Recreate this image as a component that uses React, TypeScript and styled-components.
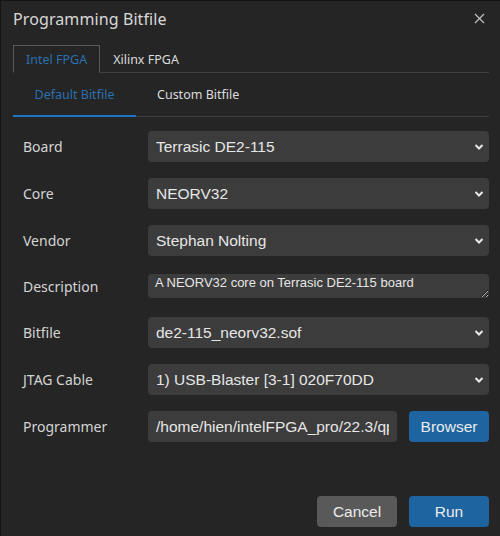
import React from "react";
import styled, { createGlobalStyle } from "styled-components";

const GlobalStyle = createGlobalStyle`
  html, body {
    margin: 0;
    padding: 0;
    background: #252525;
  }
  * {
    box-sizing: border-box;
  }
`;

const Dialog = styled.div`
  width: 500px;
  height: 536px;
  background: #252525;
  border-top: 1px solid #151515;
  border-left: 1px solid #151515;
  display: flex;
  flex-direction: column;
  padding: 0 11px 9px 12px;
  font-family: "Noto Sans", "Open Sans", sans-serif;
  color: #d6d6d6;
`;

const Header = styled.div`
  display: flex;
  align-items: center;
  justify-content: space-between;
  height: 35px;
`;

const Title = styled.h1`
  margin: 0;
  font-size: 16px;
  font-weight: 400;
  color: #d8d8d8;
  letter-spacing: 0.1px;
`;

const CloseButton = styled.button`
  background: none;
  border: none;
  padding: 0;
  margin-right: 3px;
  width: 12px;
  height: 12px;
  display: flex;
  color: #bdbdbd;
`;

const OuterTabs = styled.div`
  display: flex;
  margin-top: 9px;
  border-bottom: 1px solid #3f3f3f;
`;

const OuterTab = styled.div<{ $active?: boolean }>`
  height: 28px;
  padding: 0 12px;
  margin-bottom: -1px;
  display: flex;
  align-items: center;
  font-size: 12.5px;
  color: ${(p) => (p.$active ? "#2a70b0" : "#dcdcdc")};
  border: 1px solid ${(p) => (p.$active ? "#5a5a5a" : "transparent")};
  border-bottom: 1px solid ${(p) => (p.$active ? "#252525" : "transparent")};
`;

const InnerTabs = styled.div`
  display: flex;
  border-bottom: 1px solid #3f3f3f;
  margin-top: 0;
`;

const InnerTab = styled.div<{ $active?: boolean }>`
  width: ${(p) => (p.$active ? "123px" : "auto")};
  padding: ${(p) => (p.$active ? "0" : "0 21px")};
  height: 44px;
  margin-bottom: -1px;
  display: flex;
  align-items: center;
  justify-content: center;
  font-size: 12.5px;
  color: ${(p) => (p.$active ? "#2a70b0" : "#dcdcdc")};
  border-bottom: 2px solid ${(p) => (p.$active ? "#1f73c0" : "transparent")};
`;

const Form = styled.div`
  display: grid;
  grid-template-columns: 135px 1fr;
  row-gap: 16px;
  margin-top: 14px;
  align-items: center;
`;

const Label = styled.label`
  padding-left: 10px;
  font-size: 14px;
  color: #d4d4d4;
`;

const SelectWrap = styled.div`
  position: relative;
  height: 31px;
`;

const Select = styled.select`
  appearance: none;
  width: 100%;
  height: 100%;
  background: #3c3c3c;
  border: none;
  border-radius: 4px;
  color: #e6e6e6;
  font-family: "Liberation Sans", Arial, sans-serif;
  font-size: 15.5px;
  padding: 0 30px 0 8px;
  outline: none;
`;

const Chevron = styled.svg`
  position: absolute;
  right: 5px;
  top: 12px;
  pointer-events: none;
`;

const TextArea = styled.textarea`
  height: 24px;
  width: 100%;
  background: #3c3c3c;
  border: none;
  border-radius: 4px;
  color: #e6e6e6;
  font-family: "Liberation Sans", Arial, sans-serif;
  font-size: 13px;
  line-height: 15px;
  padding: 1px 7px;
  resize: vertical;
  outline: none;
  margin: 2px 0 3px;
  display: block;
`;

const InputRow = styled.div`
  display: flex;
  gap: 12px;
  height: 31px;
`;

const TextInput = styled.input`
  flex: 1;
  min-width: 0;
  background: #3c3c3c;
  border: none;
  border-radius: 4px;
  color: #e6e6e6;
  font-family: "Liberation Sans", Arial, sans-serif;
  font-size: 15.5px;
  padding: 0 8px;
  outline: none;
`;

const Button = styled.button<{ $variant?: "primary" | "secondary" }>`
  width: 80px;
  height: 31px;
  border: none;
  border-radius: 4px;
  background: ${(p) => (p.$variant === "secondary" ? "#595959" : "#1d64a0")};
  color: #ececec;
  font-family: "Liberation Sans", Arial, sans-serif;
  font-size: 15.5px;
  padding: 0;
`;

const Footer = styled.div`
  margin-top: auto;
  display: flex;
  justify-content: flex-end;
  gap: 12px;
`;

const ChevronIcon = () => (
  <Chevron width="10" height="8" viewBox="0 0 10 8">
    <path d="M1.5 2 L5 5.5 L8.5 2" fill="none" stroke="#e8e8e8" strokeWidth="2" />
  </Chevron>
);

const SelectField = ({ value }: { value: string }) => (
  <SelectWrap>
    <Select defaultValue={value}>
      <option>{value}</option>
    </Select>
    <ChevronIcon />
  </SelectWrap>
);

const rows = [
  { label: "Board", value: "Terrasic DE2-115" },
  { label: "Core", value: "NEORV32" },
  { label: "Vendor", value: "Stephan Nolting" },
];

const rows2 = [
  { label: "Bitfile", value: "de2-115_neorv32.sof" },
  { label: "JTAG Cable", value: "1) USB-Blaster [3-1] 020F70DD" },
];

export default function App() {
  return (
    <>
      <GlobalStyle />
      <Dialog>
        <Header>
          <Title>Programming Bitfile</Title>
          <CloseButton aria-label="Close">
            <svg width="11" height="11" viewBox="0 0 11 11">
              <path d="M1 1 L10 10 M10 1 L1 10" stroke="#bdbdbd" strokeWidth="1.3" />
            </svg>
          </CloseButton>
        </Header>

        <OuterTabs>
          <OuterTab $active>Intel FPGA</OuterTab>
          <OuterTab>Xilinx FPGA</OuterTab>
        </OuterTabs>

        <InnerTabs>
          <InnerTab $active>Default Bitfile</InnerTab>
          <InnerTab>Custom Bitfile</InnerTab>
        </InnerTabs>

        <Form>
          {rows.map((r) => (
            <React.Fragment key={r.label}>
              <Label>{r.label}</Label>
              <SelectField value={r.value} />
            </React.Fragment>
          ))}
          <Label>Description</Label>
          <TextArea defaultValue="A NEORV32 core on Terrasic DE2-115 board" />
          {rows2.map((r) => (
            <React.Fragment key={r.label}>
              <Label>{r.label}</Label>
              <SelectField value={r.value} />
            </React.Fragment>
          ))}
          <Label>Programmer</Label>
          <InputRow>
            <TextInput defaultValue="/home/hien/intelFPGA_pro/22.3/qprogrammer/quartus/bin/quartus_pgm" />
            <Button>Browser</Button>
          </InputRow>
        </Form>

        <Footer>
          <Button $variant="secondary">Cancel</Button>
          <Button>Run</Button>
        </Footer>
      </Dialog>
    </>
  );
}
